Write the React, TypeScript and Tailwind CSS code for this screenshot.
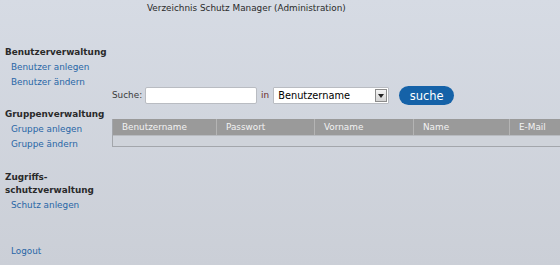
const navGroups = [
  { title: ["Benutzerverwaltung"], links: ["Benutzer anlegen", "Benutzer ändern"], gap: "" },
  { title: ["Gruppenverwaltung"], links: ["Gruppe anlegen", "Gruppe ändern"], gap: "mt-[18px]" },
  { title: ["Zugriffs-", "schutzverwaltung"], links: ["Schutz anlegen"], gap: "mt-[19px]" },
];

const columns = [
  { label: "Benutzername", w: "w-[103px]" },
  { label: "Passwort", w: "w-[98px]" },
  { label: "Vorname", w: "w-[99px]" },
  { label: "Name", w: "w-[96px]" },
  { label: "E-Mail", w: "w-[100px]" },
];

const App = () => {
  return (
    <div
      className="w-[560px] h-[265px] overflow-hidden bg-gradient-to-b from-[#d6dbe4] to-[#cbcfd7] text-[8.85px] text-[#2a2a2a]"
      style={{ fontFamily: '"DejaVu Sans", "Liberation Sans", sans-serif' }}
    >
      <div className="h-[17px] pl-[147px] pt-[2px] leading-[13px]">
        Verzeichnis Schutz Manager (Administration)
      </div>
      <div className="flex">
        <div className="w-[107px] shrink-0 pl-[5px] pt-[29px]">
          {navGroups.map((group, i) => (
            <div key={i} className={group.gap}>
              {group.title.map((line) => (
                <div key={line} className="font-bold leading-[13px]">
                  {line}
                </div>
              ))}
              <div className="mt-[1px]">
                {group.links.map((link) => (
                  <div key={link} className="pl-[6px] leading-[15px] text-[#2866a6]">
                    {link}
                  </div>
                ))}
              </div>
            </div>
          ))}
          <div className="mt-[31px] pl-[6px] leading-[15px] text-[#2866a6]">Logout</div>
        </div>
        <div className="flex-1 min-w-0 pl-[5px] pt-[69px]">
          <div className="flex items-center h-[19px]">
            <span className="text-[#3a3a3a] mr-[3px]">Suche:</span>
            <input
              className="w-[112px] h-[17px] bg-white border border-[#b9bcc2] rounded-[2px] outline-none"
              type="text"
            />
            <span className="mx-[4px] text-[#6a2b2b]">in</span>
            <div className="flex items-center w-[116px] h-[17px] bg-white border border-[#b9bcc2] rounded-[1px]">
              <span className="flex-1 pl-[4px] text-[9.8px] text-black leading-[15px]">Benutzername</span>
              <span className="flex items-center justify-center w-[12px] h-[13px] mr-[1px] border border-[#8c8c8c] bg-gradient-to-b from-[#f4f4f4] to-[#d4d4d4]">
                <svg width="6" height="4" viewBox="0 0 6 4">
                  <path d="M0 0 L6 0 L3 4 Z" fill="#222" />
                </svg>
              </span>
            </div>
            <button className="ml-[10px] w-[55px] h-[19px] rounded-full bg-[#1562a8] text-white text-[11.5px] leading-[18px]">
              suche
            </button>
          </div>
          <div className="mt-[14px] w-[600px] border-l border-b border-[#a3a6ab]">
            <div className="flex h-[16px] bg-[#9a9a9a] text-[#f2f2f2] leading-[16px]">
              {columns.map((c, i) => (
                <div
                  key={c.label}
                  className={`${c.w} shrink-0 pl-[9px] ${i > 0 ? "border-l border-[#b4b4b4]" : ""}`}
                >
                  {c.label}
                </div>
              ))}
            </div>
            <div className="h-[11px] bg-[#cfd3da] border-t border-[#b8bbc0]" />
          </div>
        </div>
      </div>
    </div>
  );
};

export default App;
